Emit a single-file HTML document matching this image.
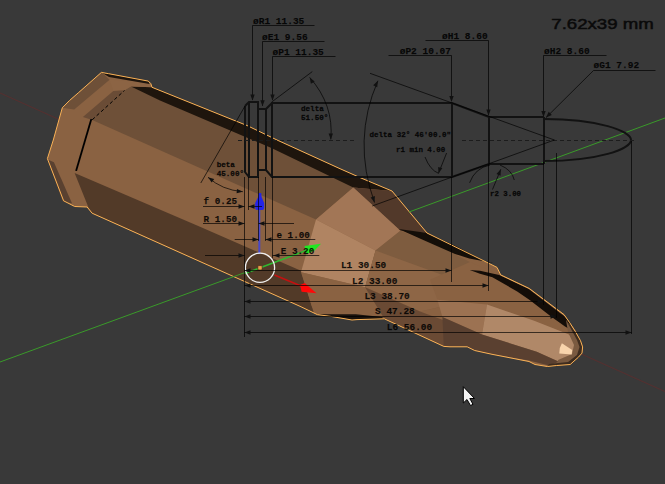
<!DOCTYPE html>
<html><head><meta charset="utf-8">
<style>
html,body{margin:0;padding:0;background:#393939;width:665px;height:484px;overflow:hidden}
svg{display:block}
text{font-family:"Liberation Mono",monospace;font-weight:bold;fill:#000;fill-opacity:0.88;stroke:#000;stroke-opacity:0.6;stroke-width:0.25}
.b{font-size:9.5px}
.s{font-size:7.6px;stroke-width:0.35}
</style></head><body>
<svg width="665" height="484" viewBox="0 0 665 484">
<rect width="665" height="484" fill="#393939"/>
<line x1="0" y1="93" x2="665" y2="391.6" stroke="#553030" stroke-width="1.1"/>
<g stroke="none">
<polygon fill="#8a6242" points="101.4,72.4 108.6,73.7 148.3,81.1 150.8,83.6 152,87.3 247.2,125.6 277,140 340,168.7 361,178 392,191 427,233 487,262.4 497,267.4 500.7,274.9 529.3,288.5 564,314.6 569.7,322.7 575.3,331.4 580.5,340.7 582.6,346.9 582,353.1 578.4,357.2 570.2,364.5 556.7,365.5 547.4,366.5 535,364.5 529,361.5 492,354.3 474.7,350.5 467.2,346.8 450,346.8 443.8,346.4 384.3,318.8 357,319.6 352,320 332.2,316.6 317.3,314.6 300,306.3 92.1,213.2 87.1,207 74.7,206.5 63.6,200.8 47.4,158.6 53.3,140 62.3,107.8 69.5,100.5 78.8,92.4"/>
<polygon fill="#6e5038" points="124.5,90.3 131,86 152,87.3 247.2,125.6 277,140 340,168.7 361,178 353.3,187.4 316,219.6 92.2,120.1"/>
<polygon fill="#523a28" points="74.6,173 200,226.8 301,270.7 312,306.7 317.3,314.6 300,306.3 92.1,213.2 88.6,207.8"/>
<polygon fill="#1e150d" points="131,86.4 152,87.3 247.2,125.6 277,140 340,168.7 361,178 392,191 353.3,187.4 272,148.2 160,100.5"/>
<polygon fill="#6e5038" points="61.8,107.7 101.5,72.3 109.6,79.8 74.2,109.6"/>
<polygon fill="#8c6444" points="109.6,79.8 148.3,81.7 152,87.3 131,86.4 124.5,90.3 113.3,91"/>
<polygon fill="#1e150d" points="102,72.8 108.6,73.7 148.3,81.1 149.5,84 109,77"/>
<polygon fill="#5a4130" points="47.6,159.5 53.9,162.3 72.1,203.6 62.6,201.5"/>
<polygon fill="#6a4c36" points="82.9,117 113.3,91 124.5,90.3 92.2,120.1"/>
<polygon fill="#000" points="90.4,119 92.2,119.3 77,171 75.2,170.8"/>
<polygon fill="#52392a" points="353.3,187.4 392,191 427,233 400.4,230.8"/>
<polygon fill="#a27656" points="316,219.6 353.3,187.4 400.4,230.8 375.6,250.6"/>
<polygon fill="#b08462" points="316,219.6 375.6,250.6 365.1,287.2 301,272.3"/>
<polygon fill="#7e5c3f" points="400.4,230.8 440,247 470,262 470,300 420,311.4 365.1,287.2 375.6,250.6"/>
<polygon fill="#8e6646" points="375.6,250.6 470,285 470,300 420,311.4 365.1,287.2"/>
<polygon fill="#8a6242" points="301,272.3 365.1,287.2 384.3,318.8 357,319.6 352,320 332.2,316.6 317.3,314.6 314,313.3"/>
<polygon fill="#6a4a34" points="365.1,287.2 420,311.4 470,330 443.8,346.4 384.3,318.8"/>
<polygon fill="#1a120c" points="316.7,314.2 355.8,314.2 381.9,317 384.3,318.8 357,319.6 352,320 332.2,316.6 317.3,314.6"/>
<polygon fill="#140e08" points="398.6,229.1 425.7,232.7 455,245.8 487,262.4 493.5,263.1 469.3,258.5 455,253.9 422.1,239.4"/>
<polygon fill="#8a6242" points="430,279.8 470,262 500.7,274.9 529.3,288.5 564,314.6 576.4,332 581.4,346.8 569,334.4 534.2,320.8 487,304.6 437.4,299.7"/>
<polygon fill="#9c7252" points="437.4,299.7 487,304.6 482,334.4 442.4,317"/>
<polygon fill="#b08868" points="487,304.6 534.2,320.8 569,334.4 581.4,346.8 578.9,354.3 559,361.7 536.7,351.8 482,334.4"/>
<polygon fill="#5a4030" points="442.4,317 482,334.4 536.7,351.8 559,361.7 549,365.4 529,360.5 492,354.3 474.7,350.5 467.2,346.8 443.8,346.4"/>
<polygon fill="#140d08" points="469.7,269.9 480,270.7 499.2,275 528.4,288.7 560,312.9 565.2,316.7 569.7,322.7 572,327 573,331 565,326.5 551,316.5 530,300.3 517.2,291.5 492.4,277.2 480,273.8"/>
<polygon fill="#7a5a40" points="566,320 575.3,331.4 580.5,340.7 582.6,346.9 582,353.1 578.4,357.2 570.2,364.5 556.7,365.5 558,360 572,354 574,345 568,332"/>
<polygon fill="#3e2c1e" points="566,320 575.3,331.4 580.5,340.7 582.6,346.9 582,353.1 578.4,357.2 570.2,364.5 556.7,365.5 547.4,366.5 549,364 568,362 577,355 579.5,347 577,340 571,329"/>
<polygon fill="#f8d4ac" points="561.9,343.3 572.2,350 571.7,354.6 559.3,353.6 559.8,347.9"/>
<path d="M92.2,119.8 L124.5,90.5" stroke="#000" stroke-width="1" stroke-dasharray="3.5,2.5"/>
</g>
<polygon fill="none" stroke="#fab256" stroke-width="1" points="101.4,72.4 108.6,73.7 148.3,81.1 150.8,83.6 152,87.3 247.2,125.6 277,140 340,168.7 361,178 392,191 427,233 487,262.4 497,267.4 500.7,274.9 529.3,288.5 564,314.6 569.7,322.7 575.3,331.4 580.5,340.7 582.6,346.9 582,353.1 578.4,357.2 570.2,364.5 556.7,365.5 547.4,366.5 535,364.5 529,361.5 492,354.3 474.7,350.5 467.2,346.8 450,346.8 443.8,346.4 384.3,318.8 357,319.6 352,320 332.2,316.6 317.3,314.6 300,306.3 92.1,213.2 87.1,207 74.7,206.5 63.6,200.8 47.4,158.6 53.3,140 62.3,107.8 69.5,100.5 78.8,92.4"/>
<line x1="0" y1="362" x2="245" y2="272.5" stroke="#3a9a2a" stroke-width="1"/>
<line x1="409" y1="212" x2="665" y2="118" stroke="#3a9a2a" stroke-width="1"/>
<line x1="259.3" y1="208" x2="259.3" y2="254" stroke="#4848c8" stroke-width="2"/>
<path fill="#2424e8" d="M258.6,193 H261.2 L261.6,197 L264.2,203 V208 Q264.2,210 262.2,210 H257.2 Q255.2,210 255.2,208 V203 L258.2,197 Z"/>
<line x1="245" y1="273.5" x2="306" y2="250.5" stroke="#30b830" stroke-width="1.6"/>
<polygon fill="#22e622" points="304.5,246 321,243.8 314.5,250.5 306,254.5"/>
<line x1="274.5" y1="275" x2="301" y2="286" stroke="#c41010" stroke-width="1.6"/>
<polygon fill="#ff0808" points="300,285 304.7,283 316.5,293.2 301.6,291.7"/>
<circle cx="260" cy="267.8" r="14.6" fill="none" stroke="#f0f0f0" stroke-width="1.3"/>
<rect x="257.8" y="265.6" width="4.4" height="4.4" rx="1" fill="#e8a048" stroke="#2a1a10" stroke-width="0.6"/>
<g stroke="#121212" fill="none" stroke-linejoin="miter">
<path stroke-width="2" d="M245,106 L249,102 H258 V109 H266 L272,103 H452 L489,117 H544 M245,106 V172 L249,177 H258 V170 H266 L272,177 H452 L489,164 H544 M249,102 V177 M258,102 V177 M266,109 V170 M272,103 V177 M452,103 V177 M489,117 V164 M544,117 V164"/>
<path stroke-width="2" d="M544,119 C598,119 631,131 631,140 C631,149 598,161 544,161"/>
<path stroke-width="1" stroke="#1c1c1c" stroke-dasharray="4,3" d="M238,140.5 H357 M462,140.5 H637"/>
<g stroke-width="1" stroke="#000" stroke-opacity="0.68">
<path d="M252.5,25.5 H314.5 M252.5,25.5 V100 M262.5,41.5 H324.5 M262.5,41.5 V106 M272.5,56.5 H335.5 M272.5,56.5 V100"/>
<path d="M388.5,55.5 H451.5 V101 M425.5,40.5 H488.5 V115 M543.5,55.5 H606.5 M543.5,55.5 V116 M593.5,70.5 H655.5 M593.5,70.5 L546,117.6"/>
<path d="M200.8,183 L244.9,106.2 M271.7,102 L312.3,71.6 M370,73.3 L554.4,140 M372.2,206 L554.4,140"/>
<path d="M309.7,77.4 Q334,105 330.8,139.4"/>
<path d="M208,177.3 Q222,190 242.8,191.7"/>
<path d="M377.9,80.8 Q352,140 374.5,202.5"/>
<path d="M425,157 Q430,170 438.5,173.3 M446.6,153 L438.5,173.3"/>
<path d="M469.6,182.8 Q475,168 490,165 M500,165 Q512,170 514.3,180 M492.5,189.5 L500.8,169.3"/>
<path d="M244.5,177 V337 M248.5,177 V210 M258.5,177 V241 M265.5,177 V241 M272.5,177 V258 M451.5,177 V282 M488.5,164 V291 M543.5,162 V305 M556.5,153 V318 M631.5,141 V334"/>
<path d="M203,206.5 H244.5 M248.5,206.5 H262 M203,223.5 H244.5 M258.5,223.5 H294 M234.7,239.5 H258.5 M265.5,239.5 H315.3 M205,255.5 H244.5 M272.5,255.5 H319.3"/>
<path d="M244.5,270.5 H451.5 M244.5,285.5 H488.5 M244.5,301.5 H543.5 M244.5,316.5 H556.5 M244.5,332.5 H631.5"/>
</g></g>
<polygon fill="#111" points="252.5,100.5 250.3,94.5 254.7,94.5"/>
<polygon fill="#111" points="262.5,106.3 260.3,100.3 264.7,100.3"/>
<polygon fill="#111" points="272.5,100.5 270.3,94.5 274.7,94.5"/>
<polygon fill="#111" points="451.5,102.0 449.3,96.0 453.7,96.0"/>
<polygon fill="#111" points="488.5,115.5 486.3,109.5 490.7,109.5"/>
<polygon fill="#111" points="543.5,117.0 541.3,111.0 545.7,111.0"/>
<polygon fill="#111" points="546.0,117.6 548.7,111.8 551.8,114.9"/>
<polygon fill="#111" points="309.7,77.4 314.7,81.4 310.9,83.7"/>
<polygon fill="#111" points="330.8,139.4 328.6,133.4 333.0,133.4"/>
<polygon fill="#111" points="208.0,177.3 214.2,178.9 211.7,182.5"/>
<polygon fill="#111" points="242.8,191.7 236.6,193.3 237.0,188.9"/>
<polygon fill="#111" points="377.9,80.8 377.2,87.2 373.2,85.2"/>
<polygon fill="#111" points="374.5,202.5 370.7,197.4 374.9,196.1"/>
<polygon fill="#111" points="438.5,173.3 438.1,166.9 442.3,168.2"/>
<polygon fill="#111" points="500.8,169.3 500.6,175.7 496.5,174.1"/>
<polygon fill="#111" points="244.5,206.5 238.5,208.7 238.5,204.3"/>
<polygon fill="#111" points="248.5,206.5 254.5,204.3 254.5,208.7"/>
<polygon fill="#111" points="244.5,223.5 238.5,225.7 238.5,221.3"/>
<polygon fill="#111" points="258.5,223.5 264.5,221.3 264.5,225.7"/>
<polygon fill="#111" points="258.5,239.5 252.5,241.7 252.5,237.3"/>
<polygon fill="#111" points="265.5,239.5 271.5,237.3 271.5,241.7"/>
<polygon fill="#111" points="244.5,255.5 238.5,257.7 238.5,253.3"/>
<polygon fill="#111" points="273.5,255.5 279.5,253.3 279.5,257.7"/>
<polygon fill="#111" points="244.5,270.5 250.5,268.3 250.5,272.7"/>
<polygon fill="#111" points="451.5,270.5 445.5,272.7 445.5,268.3"/>
<polygon fill="#111" points="244.5,285.5 250.5,283.3 250.5,287.7"/>
<polygon fill="#111" points="488.5,285.5 482.5,287.7 482.5,283.3"/>
<polygon fill="#111" points="244.5,301.5 250.5,299.3 250.5,303.7"/>
<polygon fill="#111" points="543.5,301.5 537.5,303.7 537.5,299.3"/>
<polygon fill="#111" points="244.5,316.5 250.5,314.3 250.5,318.7"/>
<polygon fill="#111" points="556.5,316.5 550.5,318.7 550.5,314.3"/>
<polygon fill="#111" points="244.5,332.5 250.5,330.3 250.5,334.7"/>
<polygon fill="#111" points="631.5,332.5 625.5,334.7 625.5,330.3"/>
<text class="b" x="253" y="24">øR1 11.35</text>
<text class="b" x="262" y="40">øE1 9.56</text>
<text class="b" x="272.5" y="55">øP1 11.35</text>
<text class="b" x="399.7" y="54">øP2 10.07</text>
<text class="b" x="442" y="38.6">øH1 8.60</text>
<text class="b" x="544" y="53.8">øH2 8.60</text>
<text class="b" x="593.5" y="68">øG1 7.92</text>
<text class="s" x="301" y="110.9">delta</text>
<text class="s" x="301" y="120.3">51.50°</text>
<text class="s" x="216.7" y="167.1">beta</text>
<text class="s" x="216.7" y="175.8">45.00°</text>
<text class="s" x="369.5" y="136.8" textLength="81.5" lengthAdjust="spacingAndGlyphs">delta 32° 46'00.0"</text>
<text class="s" x="396" y="152.2" textLength="49.3" lengthAdjust="spacingAndGlyphs">r1 min 4.00</text>
<text class="s" x="490" y="196.3" textLength="31" lengthAdjust="spacingAndGlyphs">r2 3.00</text>
<text class="b" x="203.6" y="204.4" textLength="33.5" lengthAdjust="spacingAndGlyphs">f 0.25</text>
<text class="b" x="203.6" y="221.8" textLength="33.5" lengthAdjust="spacingAndGlyphs">R 1.50</text>
<text class="b" x="276.4" y="238" textLength="33.5" lengthAdjust="spacingAndGlyphs">e 1.00</text>
<text class="b" x="280.8" y="253.5" textLength="33.5" lengthAdjust="spacingAndGlyphs">E 3.20</text>
<text class="b" x="340.9" y="268.2" textLength="45.4" lengthAdjust="spacingAndGlyphs">L1 30.50</text>
<text class="b" x="352" y="283.6" textLength="45.4" lengthAdjust="spacingAndGlyphs">L2 33.00</text>
<text class="b" x="364.4" y="299.2" textLength="45.4" lengthAdjust="spacingAndGlyphs">L3 38.70</text>
<text class="b" x="375.1" y="314.1" textLength="39.7" lengthAdjust="spacingAndGlyphs">S 47.28</text>
<text class="b" x="386.8" y="330" textLength="45.4" lengthAdjust="spacingAndGlyphs">L6 56.00</text>
<text x="551.3" y="29.4" textLength="102.5" lengthAdjust="spacingAndGlyphs" style="font-family:'Liberation Sans',sans-serif;font-weight:normal;font-size:15.5px;fill:#0a0a0a;stroke:#0a0a0a;stroke-width:0.5;fill-opacity:1;stroke-opacity:1">7.62x39 mm</text>
<path d="M463.3,386.7 V403 L467,399.5 L470.5,405.5 L473,404.3 L469.8,398.5 H474.5 Z" fill="#f4f4f4" stroke="#000" stroke-width="1"/>
</svg></body></html>
